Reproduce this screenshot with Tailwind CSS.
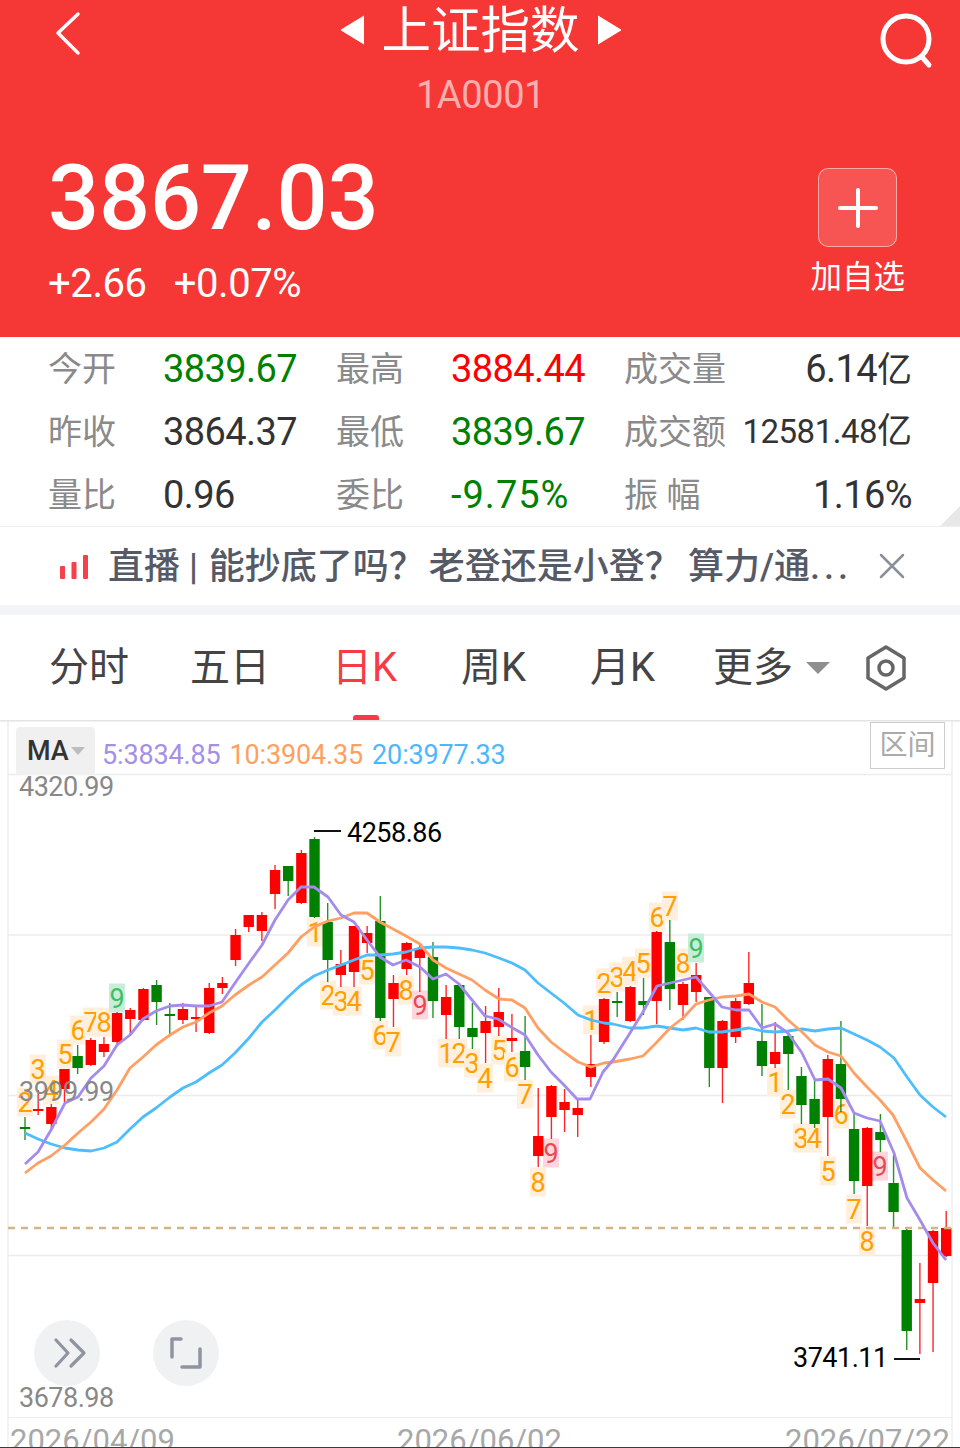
<!DOCTYPE html>
<html lang="zh">

<head>
  <meta charset="UTF-8">
  <meta name="viewport" content="width=device-width, initial-scale=1.0">
  <title>上证指数</title>
  <script src="https://cdn.jsdelivr.net/npm/@tailwindcss/browser@4"></script>
</head>

<body class="bg-white">
  <div class="relative w-[960px] h-[1448px] overflow-hidden bg-white font-['Roboto','Noto_Sans_CJK_SC',sans-serif]">

    <!-- Red quote header -->
    <header class="h-[337px] bg-[#f53836] text-white relative">
      <div class="flex items-start justify-between h-[122px]">
        <svg class="ml-[52px] mt-[8px]" width="32" height="50" viewBox="0 0 32 50" fill="none" stroke="white" stroke-width="3.5" stroke-linecap="round" stroke-linejoin="round">
          <path d="M26 6 L6 25 L26 45" />
        </svg>
        <div class="flex flex-col items-center">
          <div class="flex items-center h-[60px] gap-[18px]">
            <svg width="24" height="30" viewBox="0 0 24 30" fill="white"><path d="M24 1 V29 L1 15 Z" stroke="white" stroke-linejoin="round" /></svg>
            <span class="text-[49.5px] leading-none pt-[3px]">上证指数</span>
            <svg width="24" height="30" viewBox="0 0 24 30" fill="white"><path d="M0 1 V29 L23 15 Z" stroke="white" stroke-linejoin="round" /></svg>
          </div>
          <div class="text-[38px] tracking-[-0.4px] leading-none mt-[16px] text-white/60">1A0001</div>
        </div>
        <svg class="mr-[23px] mt-[10px]" width="60" height="60" viewBox="0 0 60 60" fill="none" stroke="white" stroke-width="5" stroke-linecap="round">
          <circle cx="29" cy="29" r="23" />
          <path d="M45 47 L52 55" />
        </svg>
      </div>
      <div class="flex justify-between">
        <div class="pl-[48px]">
          <div class="text-[90px] tracking-[-0.2px] leading-none font-medium mt-[32px]">3867.03</div>
          <div class="flex gap-[27px] text-[40px] tracking-[-0.4px] leading-none mt-[20px]"><span>+2.66</span><span>+0.07%</span></div>
        </div>
        <div class="flex flex-col items-center mr-[55px] mt-[46px]">
          <div class="w-[79px] h-[79px] rounded-[10px] bg-white/15 border border-white/50 flex items-center justify-center">
            <svg width="40" height="40" viewBox="0 0 40 40" stroke="white" stroke-width="4" stroke-linecap="round"><path d="M20 2 V38 M2 20 H38" /></svg>
          </div>
          <div class="text-[31.5px] leading-none mt-[15px]">加自选</div>
        </div>
      </div>
    </header>

    <!-- Quote table -->
    <section class="h-[190px] relative border-b border-[#eeeeee] pl-[48px] pr-[48px] pt-[1px] text-[38px] tracking-[-0.6px] text-[#333333]">
      <div class="grid grid-cols-[115px_173px_115px_173px_1fr] grid-rows-[63px_63px_63px] items-center">
        <span class="text-[34px] tracking-normal text-[#8a8a8a]">今开</span><span class="text-[#008000]">3839.67</span>
        <span class="text-[34px] tracking-normal text-[#8a8a8a]">最高</span><span class="text-[#ff0000]">3884.44</span>
        <div class="flex justify-between items-center"><span class="text-[34px] tracking-normal text-[#8a8a8a]">成交量</span><span>6.14<span class="text-[35px] tracking-normal">亿</span></span></div>

        <span class="text-[34px] tracking-normal text-[#8a8a8a]">昨收</span><span>3864.37</span>
        <span class="text-[34px] tracking-normal text-[#8a8a8a]">最低</span><span class="text-[#008000]">3839.67</span>
        <div class="flex justify-between items-center"><span class="text-[34px] tracking-normal text-[#8a8a8a]">成交额</span><span class="text-[33px] tracking-[-0.5px]">12581.48<span class="text-[35px] tracking-normal">亿</span></span></div>

        <span class="text-[34px] tracking-normal text-[#8a8a8a]">量比</span><span>0.96</span>
        <span class="text-[34px] tracking-normal text-[#8a8a8a]">委比</span><span class="text-[#008000] tracking-[1px]">-9.75%</span>
        <div class="flex justify-between items-center"><span class="text-[34px] tracking-normal text-[#8a8a8a]">振 幅</span><span>1.16%</span></div>
      </div>
      <div class="absolute right-0 bottom-0 w-0 h-0 border-l-[20px] border-l-transparent border-b-[20px] border-b-[#e8e8e8]"></div>
    </section>

    <!-- Live news bar -->
    <section class="h-[78px] flex items-center">
      <svg class="ml-[60px]" width="28" height="26" viewBox="0 0 28 26" fill="#f8404a">
        <rect x="0" y="13" width="5" height="13" rx="1" />
        <rect x="11.5" y="9" width="5" height="17" rx="1" />
        <rect x="23" y="2" width="5" height="24" rx="1" />
      </svg>
      <div class="ml-[20px] w-[746px] pt-[2px] text-[36px] font-medium leading-none text-[#555a66] whitespace-nowrap">直播 |<span class="ml-[2px]"> 能抄底了吗？</span><span class="ml-[4px]">老登还是小登？</span><span class="ml-[7px]">算力/通</span><span class="tracking-[4px]">...</span></div>
      <svg class="ml-[24px]" width="28" height="28" viewBox="0 0 28 28" stroke="#8a9099" stroke-width="2.5" stroke-linecap="round"><path d="M3 3 L25 25 M25 3 L3 25" /></svg>
    </section>

    <div class="h-[10px] bg-[#f2f4f9]"></div>

    <!-- Period tabs -->
    <nav class="h-[105px] relative flex items-center pl-[49px] text-[40px] leading-none text-[#444444]">
      <span class="w-[141px]">分时</span>
      <span class="w-[142px]">五日</span>
      <span class="w-[129px] text-[#f63b45]">日K</span>
      <span class="w-[129px]">周K</span>
      <span class="w-[123px]">月K</span>
      <span>更多</span>
      <svg class="ml-[12px]" width="26" height="14" viewBox="0 0 26 14" fill="#8f8f8f"><path d="M1 1 H25 L13 13 Z" /></svg>
      <svg class="ml-[33px]" width="44" height="48" viewBox="0 0 44 48" fill="none" stroke="#666666" stroke-width="3.5" stroke-linejoin="round">
        <path d="M22 3 L40 14 V34 L22 45 L4 34 V14 Z" />
        <circle cx="22" cy="24" r="7" />
      </svg>
      <div class="absolute left-[353px] bottom-0 w-[26px] h-[5px] rounded-t-[3px] bg-[#f63b45]"></div>
    </nav>

    <!-- Candlestick chart, drawn in page coordinates -->
    <div class="relative h-[728px]">
      <svg id="chart" class="absolute inset-0" width="960" height="728" viewBox="0 720 960 728"></svg>

      <div class="absolute left-[16px] top-[7px] w-[79px] h-[48px] rounded-[4px] bg-[#f0f0f0] flex items-center pl-[11px] text-[27px] font-medium text-[#333333]">
        MA
        <svg class="ml-[2px]" width="14" height="8" viewBox="0 0 14 8" fill="#bdbdbd"><path d="M0 0 H14 L7 8 Z" /></svg>
      </div>
      <div class="absolute left-[102px] top-[22px] flex gap-[9px] text-[27px] tracking-[-0.15px] leading-none whitespace-nowrap">
        <span class="text-[#a58fe8]">5:3834.85</span>
        <span class="text-[#ff9f5f]">10:3904.35</span>
        <span class="text-[#4cb8fb]">20:3977.33</span>
      </div>
      <div class="absolute left-[870px] top-[2px] w-[75px] h-[47px] border border-[#cccccc] bg-white flex items-center justify-center text-[28px] leading-none text-[#aaaaaa]">区间</div>

      <div class="absolute left-[34px] top-[600px] w-[66px] h-[66px] rounded-full bg-[#f0f1f3]"></div>
      <div class="absolute left-[153px] top-[600px] w-[66px] h-[66px] rounded-full bg-[#f0f1f3]"></div>
      <svg class="absolute left-[34px] top-[600px]" width="66" height="66" viewBox="0 0 66 66" fill="none" stroke="#8f95a0" stroke-width="3.2" stroke-linecap="round" stroke-linejoin="round">
        <path d="M22 20 L34 33 L22 46 M37 20 L50 33 L37 46" />
      </svg>
      <svg class="absolute left-[153px] top-[600px]" width="66" height="66" viewBox="0 0 66 66" fill="none" stroke="#8f95a0" stroke-width="3.5" stroke-linecap="round" stroke-linejoin="round">
        <path d="M28 19 H19 V37 M47 29 V47 H29" />
      </svg>

      <span class="absolute left-[19px] top-[54px] text-[27px] tracking-[-0.5px] leading-none text-[#888888]">4320.99</span>
      <span class="absolute left-[19px] top-[359px] text-[27px] tracking-[-0.5px] leading-none text-[#888888]">3999.99</span>
      <span class="absolute left-[19px] top-[665px] text-[27px] tracking-[-0.5px] leading-none text-[#888888]">3678.98</span>
      <span class="absolute left-[347px] top-[100px] text-[27px] tracking-[-0.5px] leading-none text-black">4258.86</span>
      <span class="absolute left-[793px] top-[625px] text-[27px] tracking-[-0.5px] leading-none text-black">3741.11</span>
      <span class="absolute left-[10px] top-[705px] text-[31px] leading-none text-[#a8a8a8]">2026/04/09</span>
      <span class="absolute left-[397px] top-[705px] text-[31px] leading-none text-[#a8a8a8]">2026/06/02</span>
      <span class="absolute left-[785px] top-[705px] text-[31px] leading-none text-[#a8a8a8]">2026/07/22</span>
    </div>
    <div class="absolute left-0 bottom-0 w-full h-px bg-[#3a3a3a]"></div>
  </div>

  <script>
    // [high, bodyTop, bodyBottom, low, isRed]
    const candles = [
      [1117,1127,1129,1140,0],[1090,1109,1111,1115,1],[1104,1107,1124,1128,1],[1069,1069,1089,1102,1],
      [1045,1056,1068,1074,0],[1038,1040,1065,1066,1],[1037,1044,1052,1057,1],[1012,1013,1042,1044,1],
      [1008,1010,1019,1034,1],[988,989,1020,1021,1],[980,985,1002,1025,0],[1003,1014,1016,1034,0],
      [1003,1009,1020,1024,1],[1007,1017,1019,1032,1],[983,988,1033,1034,1],[977,983,988,994,1],
      [929,935,960,966,1],[915,915,927,932,1],[912,915,931,941,1],[865,870,894,909,1],
      [866,866,881,896,0],[850,853,903,904,1],[837,839,917,918,0],[903,922,960,982,0],
      [950,964,975,987,1],[926,926,972,987,1],[926,933,943,953,1],[896,921,1018,1021,0],
      [975,983,999,1027,1],[942,943,969,975,1],[945,948,958,992,1],[942,957,1001,1018,0],
      [985,997,1015,1039,1],[983,985,1027,1039,0],[1003,1028,1037,1049,0],[1006,1021,1033,1063,1],
      [988,1012,1027,1036,1],[1014,1038,1041,1052,1],[1016,1051,1067,1080,0],[1088,1136,1156,1167,1],
      [1085,1086,1117,1139,1],[1089,1102,1110,1132,1],[1100,1108,1115,1137,1],[1035,1064,1077,1087,1],
      [998,999,1042,1044,1],[992,1001,1003,1017,0],[986,987,1021,1022,1],[978,1001,1005,1015,0],
      [931,932,1001,1024,1],[920,942,989,1010,0],[982,984,1005,1020,1],[963,975,992,1002,1],
      [997,997,1068,1087,0],[1020,1021,1068,1103,1],[998,1001,1037,1043,1],[952,983,1004,1005,1],
      [1004,1041,1066,1076,0],[1022,1052,1064,1068,1],[1032,1036,1054,1090,0],[1067,1076,1105,1124,0],
      [1080,1099,1124,1128,0],[1055,1059,1117,1156,1],[1021,1064,1099,1112,0],[1113,1129,1181,1194,0],
      [1127,1128,1186,1226,1],[1114,1132,1140,1152,0],[1155,1183,1212,1227,0],[1227,1230,1331,1350,0],
      [1263,1299,1303,1354,1],[1230,1231,1283,1352,1],[1211,1228,1256,1257,1]
    ];

    const purple = [[25,1164],[38,1152],[51,1130],[65,1103],[78,1097],[91,1078],[104,1066],[117,1045],[130,1035],[143,1019],[156,1011],[170,1006],[183,1005],[196,1006],[209,1006],[222,1002],[235,983],[249,963],[262,945],[275,920],[288,900],[301,887],[314,887],[328,897],[341,915],[354,922],[367,940],[380,957],[393,965],[406,960],[420,967],[433,979],[446,974],[459,984],[472,1000],[485,1016],[498,1019],[511,1027],[525,1035],[538,1055],[551,1072],[564,1085],[577,1099],[590,1099],[603,1072],[613,1060],[630,1033],[643,1012],[657,986],[670,983],[683,980],[696,977],[709,992],[722,1007],[736,1010],[749,1010],[762,1028],[775,1024],[788,1033],[802,1053],[815,1080],[828,1079],[841,1088],[854,1113],[867,1118],[880,1121],[894,1153],[907,1198],[920,1220],[933,1243],[946,1260]];
    const orange = [[25,1173],[38,1163],[51,1156],[65,1145],[78,1133],[91,1122],[104,1109],[117,1090],[130,1068],[143,1057],[156,1045],[170,1035],[183,1027],[196,1022],[209,1013],[222,1006],[235,995],[249,985],[262,977],[275,965],[288,953],[301,937],[314,927],[328,921],[341,918],[354,913],[367,913],[380,922],[393,929],[406,936],[420,944],[433,960],[446,968],[459,974],[472,980],[485,990],[499,999],[512,1000],[525,1008],[538,1028],[551,1042],[564,1052],[578,1062],[591,1067],[604,1063],[613,1062],[630,1059],[643,1056],[657,1042],[670,1028],[683,1018],[696,1004],[709,1000],[722,997],[736,996],[749,994],[762,1002],[775,1007],[788,1020],[802,1032],[815,1045],[828,1052],[841,1056],[854,1073],[867,1087],[880,1100],[893,1115],[907,1142],[920,1168],[933,1180],[946,1191]];
    const blue = [[25,1133],[38,1139],[51,1144],[65,1148],[78,1150],[91,1151],[104,1148],[117,1142],[130,1129],[143,1117],[156,1108],[170,1097],[183,1088],[196,1082],[209,1073],[222,1065],[235,1053],[249,1038],[262,1022],[275,1010],[288,997],[301,985],[314,976],[328,970],[341,965],[354,960],[367,955],[380,955],[393,954],[406,952],[420,948],[433,947],[446,947],[459,948],[472,950],[485,953],[499,958],[512,963],[525,970],[538,983],[551,993],[564,1003],[578,1015],[591,1020],[604,1023],[613,1024],[630,1028],[643,1028],[657,1026],[670,1028],[683,1030],[696,1028],[709,1032],[722,1032],[736,1030],[749,1028],[762,1031],[775,1032],[788,1031],[802,1029],[815,1031],[828,1029],[841,1028],[854,1034],[867,1040],[880,1047],[894,1058],[907,1077],[920,1095],[933,1107],[946,1117]];

    // TD sequence marks: [digit, x, y, kind]
    const marks = [
      ['2',25,1102],['3',38,1069],['4',51,1090],['5',65,1054],['6',78,1030],['7',91,1022],['8',104,1022],['9',117,998,'g'],
      ['1',315,932],['2',328,995],['3',341,1001],['4',354,1001],['5',367,970],['6',380,1035],['7',393,1042],['8',406,990],['9',420,1005,'r'],
      ['1',446,1053],['2',459,1053],['3',472,1063],['4',485,1078],['5',499,1050],['6',512,1067],['7',525,1094],['8',538,1182],['9',551,1153,'r'],
      ['1',591,1020],['2',604,983],['3',617,977],['4',630,971],['5',643,963],['6',657,917],['7',670,906],['8',683,963],['9',696,948,'g'],
      ['1',775,1082],['2',788,1104],['3',801,1138],['4',814,1138],['5',828,1171],['6',841,1114],['7',854,1209],['8',867,1241],['9',880,1166,'r']
    ];

    let svg = '';

    // frame and grid
    svg += '<path d="M8 720 V1448 M952 720 V1448" stroke="#efefef" stroke-width="1.5" />';
    svg += '<path d="M0 720.5 H960" stroke="#e4e4e4" stroke-width="2" />';
    [774.5, 935, 1095.5, 1255.5].forEach(y => {
      svg += `<path d="M8 ${y} H952" stroke="#ececec" stroke-width="1.5" />`;
    });
    svg += '<path d="M8 1417.5 H952" stroke="#ececec" stroke-width="1" />';

    // marks sit under the candles
    marks.forEach(([n, x, y, kind]) => {
      const bg = kind === 'g' ? '#c9eddb' : kind === 'r' ? '#ffd6dc' : '#ffefdc';
      const fg = kind === 'g' ? '#3cc060' : kind === 'r' ? '#e84a55' : '#ffa000';
      svg += `<rect x="${x - 8}" y="${y - 14.5}" width="16" height="29" fill="${bg}" />`;
      svg += `<text x="${x}" y="${y + 9.5}" text-anchor="middle" font-size="27" fill="${fg}">${n}</text>`;
    });

    candles.forEach(([high, top, bottom, low, isRed], i) => {
      const x = 25 + 13.16 * i;
      const color = isRed ? '#ff0000' : '#008000';
      svg += `<path d="M${x} ${high} V${low}" stroke="${color}" stroke-width="1.4" opacity="0.85" />`;
      svg += `<rect x="${x - 5.2}" y="${top}" width="10.4" height="${bottom - top}" fill="${color}" />`;
    });

    // last close
    svg += '<path d="M8 1228 H952" stroke="#d4b483" stroke-width="2.5" stroke-dasharray="7 6" />';

    [[blue, '#4dbdfc'], [orange, '#ff9f63'], [purple, '#a48cec']].forEach(([pts, color]) => {
      svg += `<polyline points="${pts.join(' ')}" fill="none" stroke="${color}" stroke-width="2.8" stroke-linejoin="round" />`;
    });

    // high / low markers
    svg += '<path d="M314 831 H341 M894 1359 H920" stroke="#111111" stroke-width="2" />';

    document.getElementById('chart').innerHTML = svg;
  </script>
</body>

</html>
